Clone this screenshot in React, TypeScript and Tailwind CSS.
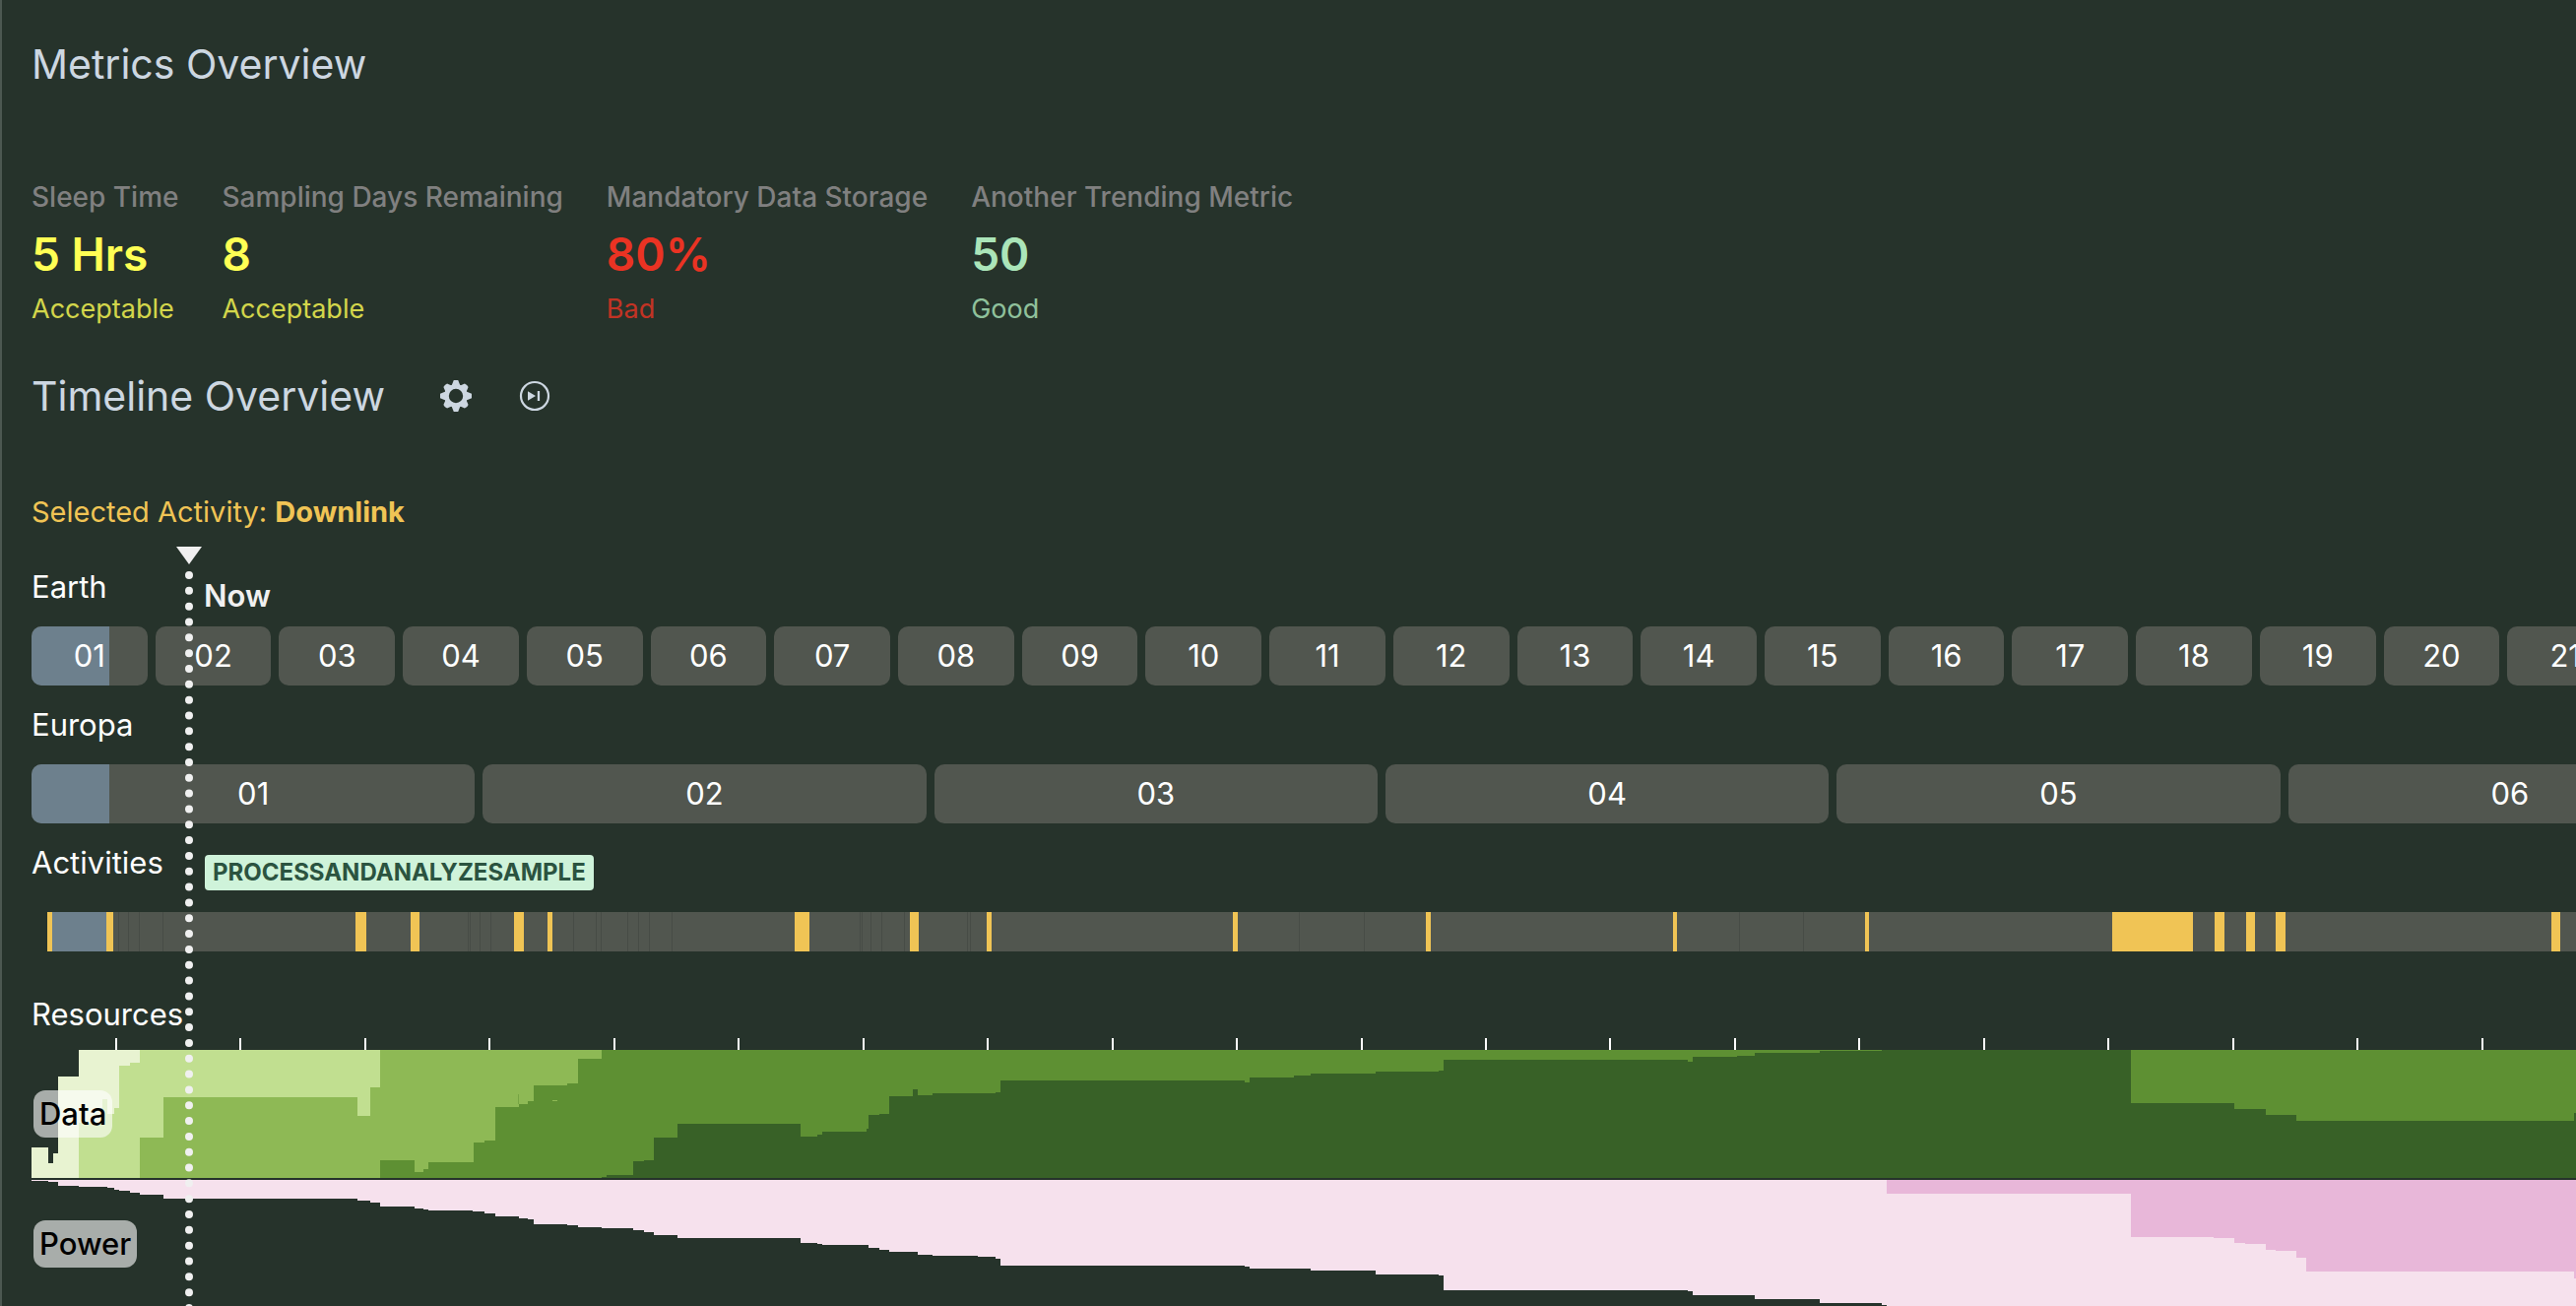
const METRICS = [
  { label: 'Sleep Time', value: '5 Hrs', status: 'Acceptable', tone: 'text-[#ffff54]' },
  { label: 'Sampling Days Remaining', value: '8', status: 'Acceptable', tone: 'text-[#ffff54]' },
  { label: 'Mandatory Data Storage', value: '80%', status: 'Bad', tone: 'text-[#ea3323]' },
  { label: 'Another Trending Metric', value: '50', status: 'Good', tone: 'text-[#abe5b9]' },
];

const pad = (n: number) => String(n).padStart(2, '0');

type Step = [x: number, y: number];

// Each band is a run of steps [x, top]; the band is filled down to the chart's floor.
const DATA_BANDS: { fill: string; steps: Step[] }[] = [
  { fill: '#e8f3d1', steps: [[0, 99], [17, 115], [22, 105], [27, 27], [48, 0]] },
  { fill: '#c1df90', steps: [[48, 74], [72, 50], [77, 65], [84, 59], [89, 16], [100, 13], [110, 0]] },
  { fill: '#8eb955', steps: [[110, 89], [134, 48], [331, 67], [344, 38], [354, 0]] },
  { fill: '#5e9033', steps: [[354, 112], [389, 124], [398, 121], [403, 114], [449, 94], [460, 92], [471, 58], [495, 55], [504, 52], [510, 36], [544, 34], [555, 9], [579, 0]] },
  { fill: '#386127', steps: [[579, 129], [584, 127], [611, 113], [622, 112], [632, 89], [656, 75], [781, 88], [798, 86], [803, 83], [848, 80], [850, 66], [861, 65], [871, 47], [895, 40], [900, 46], [915, 44], [979, 43], [984, 31], [1232, 33], [1237, 28], [1282, 26], [1299, 24], [1365, 22], [1429, 21], [1434, 10], [1682, 12], [1687, 7], [1732, 6], [1750, 3], [1816, 1], [1879, 0], [2132, 54], [2237, 60], [2269, 66], [2300, 72], [2582, 64]] },
];

// Power is measured downwards from the top of its chart.
const POWER_BANDS: { fill: string; steps: Step[] }[] = [
  { fill: '#f6e1ed', steps: [[0, 1], [17, 2], [27, 6], [48, 7], [77, 8], [84, 10], [89, 11], [100, 13], [110, 15], [134, 19], [331, 21], [344, 23], [354, 27], [389, 29], [398, 30], [403, 31], [448, 32], [460, 34], [471, 37], [495, 39], [504, 40], [510, 45], [544, 46], [555, 48], [579, 49], [611, 51], [622, 53], [632, 56], [656, 59], [781, 64], [798, 65], [803, 66], [850, 69], [861, 71], [871, 73], [900, 76], [915, 77], [961, 78], [979, 80], [984, 87], [1232, 88], [1237, 90], [1299, 92], [1365, 96], [1429, 97], [1434, 112], [1682, 113], [1687, 117], [1750, 121], [1816, 125], [1879, 127], [1884, 130]] },
  { fill: '#e8b7d9', steps: [[1884, 14], [2132, 58], [2216, 59], [2237, 64], [2248, 65], [2269, 71], [2279, 72], [2300, 79], [2310, 93], [2582, 100]] },
];

const CHART_HEIGHT = 130;
const CHART_END = 2700;

function bandPath(steps: Step[], base: number) {
  let d = `M${steps[0][0]} ${base}`;
  for (const [x, y] of steps) d += `H${x}V${y}`;
  return `${d}H${CHART_END}V${base}Z`;
}

const ACTIVITIES: [x: number, width: number][] = [
  [0, 5], [60, 7], [313, 11], [369, 9], [474, 10], [508, 5], [759, 15], [876, 9], [954, 5],
  [1204, 5], [1400, 5], [1651, 4], [1846, 4], [2097, 82], [2201, 10], [2233, 9], [2263, 10], [2543, 9],
];

const ACTIVITY_MARKS = [
  72, 82, 93, 117, 427, 429, 439, 450, 534, 557, 562, 589, 600, 611, 634, 825, 827, 836, 847, 870,
  934, 937, 1271, 1337, 1718, 1783,
];

const TICKS = Array.from({ length: 21 }, (_, i) => Math.round(85 + i * 126.45));

function GearIcon() {
  return (
    <svg viewBox="-16 -16 32 32" className="size-8" fill="currentColor" aria-hidden="true">
      <circle r="9.5" fill="none" stroke="currentColor" strokeWidth="4.6" />
      {[0, 90, 180, 270].map((a) => (
        <path key={a} d="M-4.4-10.5L-2.2-16H2.2L4.4-10.5Z" transform={`rotate(${a})`} />
      ))}
      {[45, 135, 225, 315].map((a) => (
        <path key={a} d="M-4.6-10L-2.6-15.2Q0-16.4 2.6-15.2L4.6-10Z" transform={`rotate(${a})`} />
      ))}
    </svg>
  );
}

function SkipIcon() {
  return (
    <svg viewBox="-16 -16 32 32" className="size-8" fill="currentColor" aria-hidden="true">
      <circle r="14" fill="none" stroke="currentColor" strokeWidth="2.2" />
      <path d="M-7-4.8L1 0L-7 4.8Z" />
      <rect x="2.8" y="-5" width="2.3" height="10" />
    </svg>
  );
}

function DayCell({ label, elapsed }: { label: string; elapsed: boolean }) {
  return (
    <div className="relative flex h-[60px] items-center justify-center overflow-hidden rounded-[10px] bg-[#51564f]">
      {elapsed && <span className="absolute inset-y-0 left-0 w-[79px] bg-[#6d808d]" />}
      <span className="relative">{label}</span>
    </div>
  );
}

export default function App() {
  return (
    <main className="relative h-screen overflow-hidden border-l-2 border-[#4c5851] bg-[#26332b] pl-[30px] font-[Inter,sans-serif] text-white">
      <h1 className="pt-10 text-[41px] leading-[50px] text-[#cdd7e1]">Metrics Overview</h1>

      <dl className="mt-[90px] flex gap-11">
        {METRICS.map((m) => (
          <div key={m.label}>
            <dt className="text-[28px] leading-10 font-medium text-[#808080]">{m.label}</dt>
            <dd className={m.tone}>
              <div className="py-2 text-[46px] leading-[60px] font-semibold">{m.value}</div>
              <div className="text-[27px] leading-9 opacity-80">{m.status}</div>
            </dd>
          </div>
        ))}
      </dl>

      <header className="mt-10 flex items-center text-[#cdd7e1]">
        <h2 className="text-[41px] leading-[60px]">Timeline Overview</h2>
        <button type="button" aria-label="Timeline settings" className="ml-14">
          <GearIcon />
        </button>
        <button type="button" aria-label="Jump to now" className="ml-12">
          <SkipIcon />
        </button>
      </header>

      <p className="mt-[68px] text-[29px] leading-10 text-[#f0c455]">
        Selected Activity: <strong className="font-bold">Downlink</strong>
      </p>

      <section aria-label="Timeline" className="relative text-[31px] leading-10">
        <h3 className="pt-9 pb-5">Earth</h3>
        <div className="grid w-[2632px] grid-cols-21 gap-2">
          {Array.from({ length: 21 }, (_, i) => (
            <DayCell key={i} label={pad(i + 1)} elapsed={i === 0} />
          ))}
        </div>

        <h3 className="py-5">Europa</h3>
        <div className="grid w-[2742px] grid-cols-6 gap-2">
          {Array.from({ length: 6 }, (_, i) => (
            <DayCell key={i} label={pad(i + 1)} elapsed={i === 0} />
          ))}
        </div>

        <div className="flex h-[90px] items-start pt-5">
          <h3 className="w-44">Activities</h3>
          <span className="mt-3 rounded bg-[#cff3da] px-2 text-[24px] leading-9 font-bold text-[#2b5340]">
            PROCESSANDANALYZESAMPLE
          </span>
        </div>
        <svg className="ml-4 block h-10 w-full bg-[#51564f]" role="img" aria-label="Activities">
          <rect x="5" width="55" height="40" fill="#6d808d" />
          {ACTIVITY_MARKS.map((x) => (
            <rect key={x} x={x} width="1" height="40" fill="#474c46" />
          ))}
          {ACTIVITIES.map(([x, w]) => (
            <rect key={x} x={x} width={w} height="40" fill="#f0c455" />
          ))}
        </svg>

        <h3 className="pt-11">Resources</h3>
        <svg className="mt-1 block h-3 w-full" aria-hidden="true">
          {TICKS.map((x) => (
            <rect key={x} x={x} width="2" height="12" fill="#fff" />
          ))}
        </svg>

        <div className="relative">
          <svg className="block h-[130px] w-full" role="img" aria-label="Data over time">
            {DATA_BANDS.map((b) => (
              <path key={b.fill} d={bandPath(b.steps, CHART_HEIGHT)} fill={b.fill} />
            ))}
            <path d="M529 51h5v1h-5z" fill="#8eb955" />
            <path d="M494 45h1v10h-1z" fill="#5e9033" opacity="0.5" />
          </svg>
          <span className="absolute top-[41px] left-[2px] rounded-xl bg-white/60 px-1.5 leading-[48px] font-medium text-black">
            Data
          </span>
        </div>
        <div className="relative mt-[2px]">
          <svg className="block h-[130px] w-full" role="img" aria-label="Power over time">
            {POWER_BANDS.map((b) => (
              <path key={b.fill} d={bandPath(b.steps, 0)} fill={b.fill} />
            ))}
          </svg>
          <span className="absolute top-[41px] left-[2px] rounded-xl bg-white/60 px-1.5 leading-[48px] font-medium text-black">
            Power
          </span>
        </div>

        <div className="pointer-events-none absolute top-[15px] left-[147px] flex text-[#f0f0f0]">
          <svg className="h-[800px] w-[26px]" aria-hidden="true">
            <path d="M0 0H26L13 18Z" fill="currentColor" />
            <line x1="13" y1="29" x2="13" y2="800" stroke="currentColor" strokeWidth="8" strokeLinecap="round" strokeDasharray="0 15.83" />
          </svg>
          <span className="mt-[30px] ml-0.5 font-semibold">Now</span>
        </div>
      </section>
    </main>
  );
}
